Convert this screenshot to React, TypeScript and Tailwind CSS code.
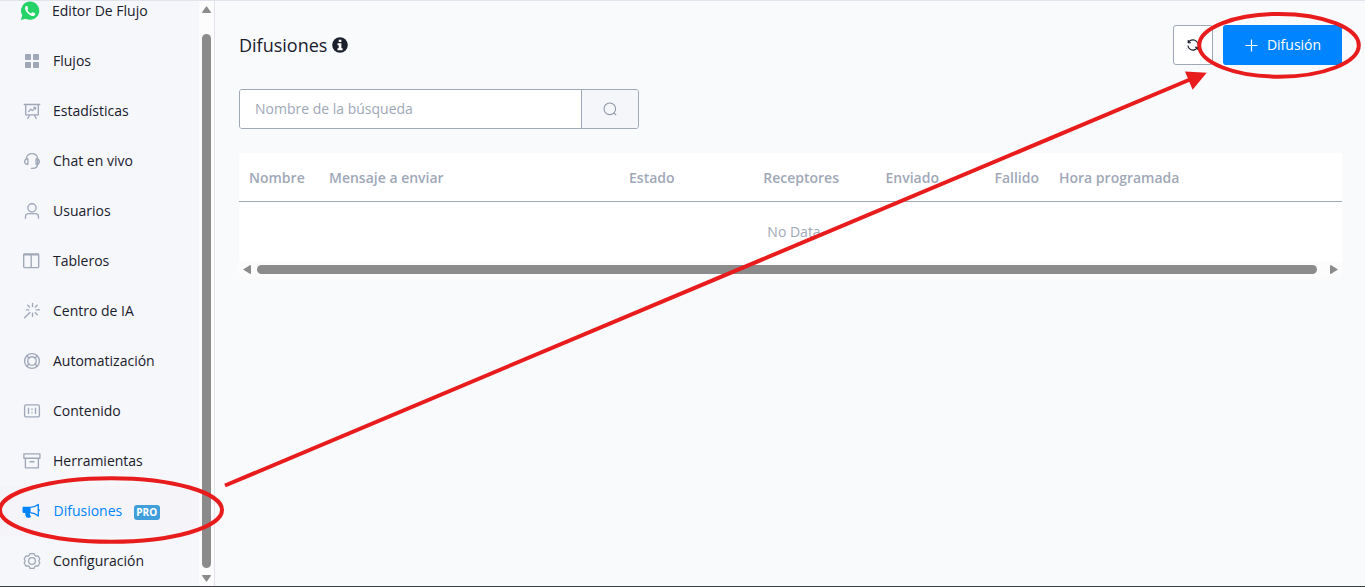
import React from 'react';

const LineIcon: React.FC<{ children: React.ReactNode }> = ({ children }) => (
  <svg
    width="18"
    height="18"
    viewBox="0 0 18 18"
    fill="none"
    stroke="currentColor"
    strokeWidth="1.35"
    strokeLinecap="round"
    strokeLinejoin="round"
  >
    {children}
  </svg>
);

const WhatsappIcon = () => (
  <svg width="20" height="20" viewBox="0 0 20 20" className="shrink-0">
    <path d="M10.2.6a9.1 9.1 0 1 1-4.4 17.1L.9 19l1.4-4.7A9.1 9.1 0 0 1 10.2.6z" fill="#25d366" />
    <path
      d="M7.4 5.3c-.3-.5-.7-.5-1.1-.3-1 .6-1.5 1.8-1.1 3.100.7 2.800 3.800 6 6.700 6.800 1.500.4 3-.3 3.300-1.700.1-.5 0-.7-.3-.9l-2-1c-.4-.2-.7 0-1 .4-.5.7-.7.8-1.200.6-1.300-.6-2.500-1.700-3.200-3-.2-.4 0-.6.3-.9.3-.4.5-.7.3-1.100z"
      fill="#fff"
    />
  </svg>
);

const GridIcon = () => (
  <svg width="18" height="18" viewBox="0 0 18 18" fill="currentColor">
    <rect x="2" y="2" width="6" height="6" rx="0.8" />
    <rect x="10" y="2" width="6" height="6" rx="0.8" />
    <rect x="2" y="10" width="6" height="6" rx="0.8" />
    <rect x="10" y="10" width="6" height="6" rx="0.8" />
  </svg>
);

const BoardIcon = () => (
  <LineIcon>
    <path d="M1.3 2.5h15.4M2.7 2.5v10.300h12.600V2.5M6.600 13l-1.800 3.500M11.400 13l1.800 3.500" />
    <path d="M5.600 9.600l2.200-2.400 1.700 1.400 2.900-3M10.900 5.500h1.600v1.600" />
  </LineIcon>
);

const HeadsetIcon = () => (
  <LineIcon>
    <path d="M3.3 6.8C3.6 3.6 6 1.6 9 1.6s5.4 2 5.7 5.2v4.6c0 3-2 4.9-5.2 4.9H8.4" />
    <path d="M4.9 6.9v5.4c-1.9.2-3.3-.9-3.3-2.7s1.4-2.9 3.3-2.7zM13.1 6.9v5.4c1.9.2 3.3-.9 3.3-2.7s-1.4-2.9-3.3-2.7z" />
  </LineIcon>
);

const UserIcon = () => (
  <LineIcon>
    <circle cx="9" cy="5.8" r="4.1" />
    <path d="M2.5 16.3v-1.6c0-2 1.2-3.1 3.2-3.1h6.6c2 0 3.2 1.1 3.2 3.1v1.6" />
  </LineIcon>
);

const ColumnsIcon = () => (
  <LineIcon>
    <rect x="0.7" y="1.9" width="15" height="13.7" rx="0.8" />
    <path d="M1 2.7h14.4M8.2 3v12.4" />
  </LineIcon>
);

const MagicIcon = () => (
  <LineIcon>
    <path d="M9.5 1.5v3M9.5 11.2v3M13.2 7.9h3.2M3.4 7.9h2.4M12.3 5l1.9-1.8M12.3 10.7l2 2M6.5 5L4.7 3.2M6.9 10.5l-5.3 5.3" />
  </LineIcon>
);

const HelpIcon = () => (
  <LineIcon>
    <circle cx="9" cy="9" r="7.4" />
    <circle cx="9" cy="9" r="4.3" />
    <path d="M3.8 3.8l2.3 2.4M14.2 3.8l-2.3 2.4M3.8 14.2l2.3-2.4M14.2 14.2l-2.3-2.4" />
  </LineIcon>
);

const ContentIcon = () => (
  <LineIcon>
    <rect x="1.6" y="2.9" width="14.8" height="12" rx="1.4" />
    <path d="M5.5 6.2v5.4M12.5 6.2v5.4M9 7v.5M9 10.3v.5" />
  </LineIcon>
);

const ArchiveIcon = () => (
  <LineIcon>
    <path d="M0.9 1.8h16v4.4h-16zM2.4 6.2v9.6h13V6.2M7 9.7h4" />
  </LineIcon>
);

const BullhornIcon = () => (
  <svg width="18" height="18" viewBox="0 0 18 18" className="-ml-px shrink-0" fill="currentColor">
    <path d="M1.6 4.7H8.600v6.200H7.900c-.2 1.500.2 2.700 1.200 3.700-.5 1.400-3.700 1.700-4.800.6-.9-1.300-1.200-2.700-.9-4.300H1.600C.9 10.900.5 10.500.5 9.800V5.800c0-.7.4-1.100 1.100-1.100z" />
    <path
      d="M8.300 5.300c3.100-.1 5.700-1.100 8-2.900v11.600c-2.300-1.900-4.900-3-8-3.300"
      fill="none"
      stroke="currentColor"
      strokeWidth="1.300"
      strokeLinejoin="round"
    />
    <path d="M16.300 6.600c1.900.1 1.900 3 0 3.100z" />
  </svg>
);

const GearIcon = () => (
  <LineIcon>
    <path d="M7 1.6h4l.9 1.9 1.2.7 2-.2 1.7 3-1.1 2 1.1 2-1.7 3-2-.2-1.2.7-.9 1.9H7l-.9-1.9-1.2-.7-2 .2-1.7-3 1.1-2-1.1-2 1.7-3 2 .2 1.2-.7z" />
    <circle cx="9" cy="9" r="3.4" />
  </LineIcon>
);

const InfoIcon = () => (
  <svg width="16" height="16" viewBox="0 0 16 16">
    <circle cx="8" cy="8" r="7.8" fill="currentColor" />
    <path d="M6.700 2.700h2.700v2.400H6.700zM5.500 6.300h3.900v5h1.200v1.900H5.500v-1.900h1.200V8.200H5.500z" fill="#fff" />
  </svg>
);

const menu = [
  { label: 'Flujos', icon: <GridIcon /> },
  { label: 'Estadísticas', icon: <BoardIcon /> },
  { label: 'Chat en vivo', icon: <HeadsetIcon /> },
  { label: 'Usuarios', icon: <UserIcon /> },
  { label: 'Tableros', icon: <ColumnsIcon /> },
  { label: 'Centro de IA', icon: <MagicIcon /> },
  { label: 'Automatización', icon: <HelpIcon /> },
  { label: 'Contenido', icon: <ContentIcon /> },
  { label: 'Herramientas', icon: <ArchiveIcon /> },
  { label: 'Difusiones', icon: <BullhornIcon />, active: true, pro: true },
  { label: 'Configuración', icon: <GearIcon /> },
];

const columns = [
  { label: 'Nombre', className: 'w-20' },
  { label: 'Mensaje a enviar', className: 'w-[300px]' },
  { label: 'Estado', className: 'w-[130px]' },
  { label: 'Receptores', className: 'w-[100px] text-right' },
  { label: 'Enviado', className: 'w-[100px] text-right' },
  { label: 'Fallido', className: 'w-[100px] text-right' },
  { label: 'Hora programada', className: 'flex-1' },
];

const Sidebar = () => (
  <aside className="flex w-[215px] shrink-0 overflow-hidden border-r border-[#e1e4eb] bg-[#f5f7fa]">
    <nav className="-mt-[15px] w-[199px] shrink-0">
      <a className="flex h-[50px] items-center pb-px pl-5">
        <WhatsappIcon />
        <span className="ml-3">Editor De Flujo</span>
      </a>
      {menu.map((item) => (
        <a
          key={item.label}
          className={`flex h-[50px] items-center pl-[23px] ${item.active ? 'bg-[#f5f5f9] text-[#0084ff]' : ''}`}
        >
          <span className={`flex w-[18px] shrink-0 ${item.active ? '' : 'text-[#a0a8b8]'}`}>{item.icon}</span>
          <span className={item.active ? 'ml-[12.5px]' : 'ml-3'}>{item.label}</span>
          {item.pro && (
            <span className="mt-[3px] ml-[11.5px] flex h-[15px] w-[26px] items-center justify-center rounded-[3px] bg-[#409fdb] text-[10px] font-bold text-white">
              PRO
            </span>
          )}
        </a>
      ))}
    </nav>
    <div className="flex w-[15px] shrink-0 flex-col items-center bg-[#fcfcfc] pt-[5px] pb-1">
      <svg width="9" height="7" viewBox="0 0 9 7" className="shrink-0 fill-[#8b8b8b]">
        <path d="M4.5 0L9 6.2Q9 7 8.2 7H.8Q0 7 0 6.2z" />
      </svg>
      <div className="mt-[21px] mb-[7px] w-[9px] flex-1 rounded-full bg-[#8b8b8b]" />
      <svg width="9" height="7" viewBox="0 0 9 7" className="shrink-0 fill-[#8b8b8b]">
        <path d="M4.5 7L0 .8Q0 0 .8 0h7.4Q9 0 9 .8z" />
      </svg>
    </div>
  </aside>
);

const Annotations = () => (
  <svg
    className="pointer-events-none absolute inset-x-0 -top-px"
    width="1365"
    height="587"
    viewBox="0 0 1365 587"
    fill="none"
    stroke="#e81c1c"
    strokeWidth="4"
  >
    <ellipse cx="111" cy="510" rx="111" ry="31.8" />
    <ellipse cx="1279" cy="45.3" rx="79.8" ry="31.4" />
    <path d="M225 485.5L1190 79.5" />
    <path d="M1206.7 72.8L1185 71.4L1192.6 89.8z" fill="#e81c1c" stroke="none" />
  </svg>
);

const App: React.FC = () => {
  return (
    <div className="relative flex h-[587px] w-[1365px] overflow-hidden border-t border-b border-t-[#e1e4eb] border-b-[#3c3f45] bg-[#f9fafc] font-['Open_Sans',sans-serif] text-sm text-[#1a202c]">
      <Sidebar />

      <main className="min-w-0 flex-1 pt-6 pr-[23px] pl-6">
        <header className="flex h-10 items-center justify-between">
          <h1 className="flex items-center gap-[5px] text-lg">
            Difusiones
            <InfoIcon />
          </h1>
          <div className="flex gap-2.5">
            <button className="flex size-10 items-center justify-center rounded-[3px] border border-[#a0a8b8] bg-white">
              <svg width="12" height="12" viewBox="0 0 12 12" fill="none" stroke="currentColor" strokeWidth="1.1">
                <path d="M1.200 1v2.800H4M1.400 3.700C2.300 1.800 4.100.9 6 .9c2.800 0 5 2.200 5 4.700M10.800 11V8.200H8M10.600 8.300c-.9 1.900-2.700 2.800-4.600 2.800-2.800 0-5-2.200-5-4.700" />
              </svg>
            </button>
            <button className="flex h-10 w-[119px] items-center justify-center gap-[9px] rounded-[3px] bg-[#0084ff] pl-px text-white">
              <svg width="13" height="13" viewBox="0 0 13 13" stroke="currentColor" strokeWidth="1.2">
                <path d="M6.500.5v12M.5 6.500h12" />
              </svg>
              Difusión
            </button>
          </div>
        </header>

        <div className="mt-6 flex h-10 w-[400px] overflow-hidden rounded-[3px] border border-[#a0a8b8]">
          <input
            className="min-w-0 flex-1 bg-white px-[15px] outline-none placeholder:text-[#a0a8b8]"
            placeholder="Nombre de la búsqueda"
          />
          <button className="flex w-[57px] items-center justify-center border-l border-[#a0a8b8] bg-[#f5f6fa] text-[#8f97a6]">
            <svg width="14" height="14" viewBox="0 0 14 14" fill="none" stroke="currentColor" strokeWidth="1.100">
              <circle cx="6.800" cy="6.800" r="5.800" />
              <path d="M10.900 10.900l2.300 2.300" />
            </svg>
          </button>
        </div>

        <section className="mt-6 bg-white text-[#a0a8b8]">
          <div className="flex h-[49px] items-center border-b border-[#a0a8b8] pt-0.5 font-semibold">
            {columns.map((col) => (
              <div key={col.label} className={`px-2.5 whitespace-nowrap ${col.className}`}>
                {col.label}
              </div>
            ))}
          </div>
          <div className="flex h-[60px] w-[1110px] items-center justify-center">No Data</div>
          <div className="flex h-[15px] items-center bg-[#fcfcfc] px-1">
            <svg width="8" height="9" viewBox="0 0 8 9" className="fill-[#8b8b8b]">
              <path d="M0 4.5L7.2 0Q8 0 8 .8v7.4Q8 9 7.2 9z" />
            </svg>
            <div className="mr-[13px] ml-1.5 h-[9px] flex-1 rounded-full bg-[#8b8b8b]" />
            <svg width="8" height="9" viewBox="0 0 8 9" className="fill-[#8b8b8b]">
              <path d="M8 4.5L.8 0Q0 0 0 .8v7.4Q0 9 .8 9z" />
            </svg>
          </div>
        </section>
      </main>

      <Annotations />
    </div>
  );
};

export default App;
